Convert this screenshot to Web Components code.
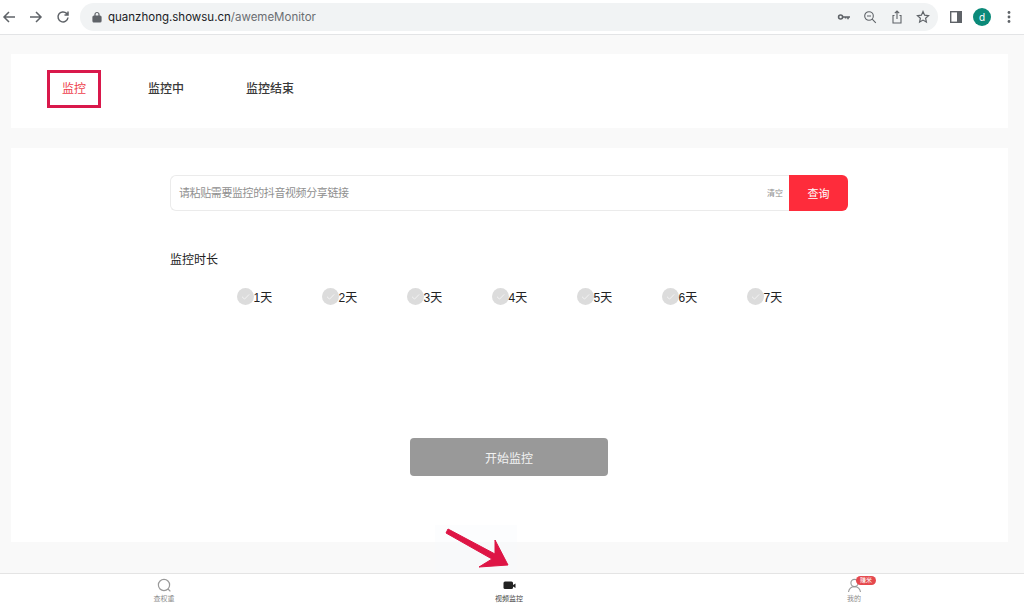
<!DOCTYPE html>
<html lang="zh">
<head>
<meta charset="utf-8">
<title>awemeMonitor</title>
<style>
  html, body { margin: 0; height: 100%; }
  body {
    width: 1024px;
    height: 605px;
    overflow: hidden;
    position: relative;
    display: flex;
    flex-direction: column;
    background: #f9f9f9;
    font-family: "Liberation Sans", "Noto Sans CJK SC", sans-serif;
    color: #222;
  }
</style>
</head>
<body>
<browser-bar></browser-bar>
<monitor-page></monitor-page>
<bottom-tabs></bottom-tabs>
<annotation-arrow></annotation-arrow>

<script>
class BrowserBar extends HTMLElement {
  constructor() {
    super();
    this.attachShadow({ mode: "open" });
  }

  connectedCallback() {
    this.shadowRoot.innerHTML = /* html */`
    <style>
      :host {
        display: flex;
        align-items: center;
        height: 34px;
        flex: none;
        background: #fff;
        border-bottom: 1px solid #e3e4e6;
        padding-left: 1px;
      }
      svg { display: block; flex: none; fill: none; stroke: #5f6368; stroke-width: 1.5; }
      .nav { display: flex; gap: 11px; align-items: center; }
      .omni {
        display: flex;
        align-items: center;
        width: 858px;
        height: 28px;
        margin-left: 9px;
        border-radius: 14px;
        background: #f1f3f4;
        box-sizing: border-box;
        padding: 0 8px 0 12px;
        font: 11.5px Inter, "Liberation Sans", sans-serif;
        color: #202124;
      }
      .url { margin-left: 6px; }
      .url span { color: #6b6e72; }
      .tools { display: flex; align-items: center; gap: 12.300px; margin-left: auto; }
      .after { display: flex; align-items: center; margin-left: 12px; }
      .avatar {
        width: 18px; height: 18px; border-radius: 50%;
        margin-left: 11px;
        background: #0b8a79; color: #fff;
        font: 10px/18px Inter, sans-serif; text-align: center;
      }
      .dots { margin-left: 16px; }
    </style>
    <div class="nav">
      <svg width="16" height="16" viewBox="0 0 16 16"><path d="M14 8H3M8 3 3 8l5 5"/></svg>
      <svg width="16" height="16" viewBox="0 0 16 16"><path d="M2 8h11M8 3l5 5-5 5"/></svg>
      <svg width="16" height="16" viewBox="0 0 16 16"><path d="M13 8.500A5 5 0 1 1 11.600 4.400L13 6M13 2.500V6H9.500"/></svg>
    </div>
    <div class="omni">
      <svg width="10" height="12" viewBox="0 0 10 12" style="stroke:#5f6368;stroke-width:1.2"><rect x="1" y="5" width="8" height="6" rx="1" fill="#5f6368"/><path d="M3 5V3.500a2 2 0 0 1 4 0V5"/></svg>
      <div class="url">quanzhong.showsu.cn<span>/awemeMonitor</span></div>
      <div class="tools">
        <svg width="14" height="14" viewBox="0 0 14 14" style="stroke-width:1.6"><circle cx="3.600" cy="7" r="2"/><path d="M5.600 7H13M11 7v2.200M8.600 7v1.600"/></svg>
        <svg width="14" height="14" viewBox="0 0 14 14" style="stroke-width:1.1"><circle cx="6" cy="6" r="4.300"/><path d="m9.200 9.200 3.600 3.600M4 6h4"/></svg>
        <svg width="14" height="14" viewBox="0 0 14 14" style="stroke-width:1.1"><path d="M4.500 5.500H3v7.500h8V5.500H9.500M7 9V1.200M4.800 3.200 7 1l2.200 2.200"/></svg>
        <svg width="14" height="14" viewBox="0 0 14 14" style="stroke-width:1.2"><path d="m7 1.600 1.600 3.600 3.900.4-2.900 2.600.8 3.800L7 10.100 3.600 12l.8-3.800-2.900-2.600 3.900-.4z"/></svg>
      </div>
    </div>
    <div class="after">
      <svg width="12" height="12" viewBox="0 0 12 12" style="stroke-width:1.4"><rect x=".7" y=".7" width="10.600" height="10.600"/><rect x="7" y="1" width="4" height="10" fill="#5f6368" stroke="none"/></svg>
      <div class="avatar">d</div>
      <svg class="dots" width="4" height="14" viewBox="0 0 4 14" style="stroke:none;fill:#5f6368"><circle cx="2" cy="2.500" r="1.400"/><circle cx="2" cy="7" r="1.400"/><circle cx="2" cy="11.500" r="1.400"/></svg>
    </div>
    `;
  }
}

class MonitorTabs extends HTMLElement {
  constructor() {
    super();
    this.attachShadow({ mode: "open" });
  }

  connectedCallback() {
    this.shadowRoot.innerHTML = /* html */`
    <style>
      :host {
        display: flex;
        flex: none;
        align-items: center;
        height: 74px;
        box-sizing: border-box;
        background: #fff;
        padding: 0 0 5px 36px;
        font-size: 12px;
        font-weight: 500;
        color: #3a3a3a;
      }
      .tab { line-height: 18px; }
      .active {
        width: 54px;
        height: 38px;
        box-sizing: border-box;
        border: 3px solid #d9184b;
        display: flex;
        align-items: center;
        justify-content: center;
        color: #ee3f4d;
        font-weight: 400;
      }
      .mid { margin-left: 47px; }
      .end { margin-left: 62px; }
    </style>
    <div class="tab active">监控</div>
    <div class="tab mid">监控中</div>
    <div class="tab end">监控结束</div>
    `;
  }
}

class LinkSearch extends HTMLElement {
  constructor() {
    super();
    this.attachShadow({ mode: "open" });
  }

  connectedCallback() {
    this.shadowRoot.innerHTML = /* html */`
    <style>
      :host {
        display: flex;
        height: 36px;
        font-size: 11px;
      }
      .field {
        flex: 1;
        display: flex;
        align-items: center;
        justify-content: space-between;
        box-sizing: border-box;
        border: 1px solid #ebebeb;
        border-right: 0;
        border-radius: 6px 0 0 6px;
        padding: 0 6px 2px 8px;
        color: #8f8f8f;
      }
      .hint { letter-spacing: -.4px; }
      .clear { font-size: 8px; }
      .go {
        width: 59px;
        border-radius: 0 6px 6px 0;
        background: #fe2c3b;
        color: #fff;
        font-size: 11px;
        display: flex;
        align-items: center;
        justify-content: center;
      }
    </style>
    <div class="field"><span class="hint">请粘贴需要监控的抖音视频分享链接</span><span class="clear">清空</span></div>
    <div class="go">查询</div>
    `;
  }
}

class DayOption extends HTMLElement {
  constructor() {
    super();
    this.attachShadow({ mode: "open" });
  }

  connectedCallback() {
    this.shadowRoot.innerHTML = /* html */`
    <style>
      :host { display: flex; align-items: center; font-size: 12px; color: #222; }
      svg { display: block; flex: none; }
    </style>
    <svg width="17" height="17" viewBox="0 0 17 17">
      <circle cx="8.500" cy="8.500" r="8.500" fill="#dcdcdc"/>
      <path d="m5 8.700 2.500 2.400L12.200 6.400" fill="none" stroke="#f4f4f4" stroke-width="1"/>
    </svg>
    <slot></slot>
    `;
  }
}

class MonitorPage extends HTMLElement {
  constructor() {
    super();
    this.attachShadow({ mode: "open" });
  }

  connectedCallback() {
    this.shadowRoot.innerHTML = /* html */`
    <style>
      :host {
        display: flex;
        flex-direction: column;
        flex: none;
        gap: 20px;
        height: 538px;
        box-sizing: border-box;
        padding: 19px 16px 0 11px;
      }
      .main {
        height: 394px;
        flex: none;
        box-sizing: border-box;
        background: #fff;
        padding: 27px 160px 0 159px;
        display: flex;
        flex-direction: column;
      }
      .label { margin-top: 40px; font-size: 12px; line-height: 18px; color: #222; }
      .days {
        display: grid;
        grid-template-columns: repeat(7, 85px);
        margin: 19px 0 0 66.500px;
      }
      .start {
        align-self: center;
        width: 198px;
        height: 38px;
        margin-top: 133px;
        border-radius: 4px;
        background: #999;
        color: #f2f2f2;
        font-size: 12px;
        display: flex;
        align-items: center;
        justify-content: center;
      }
    </style>
    <monitor-tabs></monitor-tabs>
    <div class="main">
      <link-search></link-search>
      <div class="label">监控时长</div>
      <div class="days">
        <day-option>1天</day-option>
        <day-option>2天</day-option>
        <day-option>3天</day-option>
        <day-option>4天</day-option>
        <day-option>5天</day-option>
        <day-option>6天</day-option>
        <day-option>7天</day-option>
      </div>
      <div class="start">开始监控</div>
    </div>
    `;
  }
}

class BottomTabs extends HTMLElement {
  constructor() {
    super();
    this.attachShadow({ mode: "open" });
  }

  connectedCallback() {
    this.shadowRoot.innerHTML = /* html */`
    <style>
      :host {
        display: flex;
        justify-content: space-between;
        flex: none;
        height: 32px;
        box-sizing: border-box;
        background: #fff;
        border-top: 1px solid #e4e4e4;
        padding: 4px 147px 0 141px;
      }
      .item {
        position: relative;
        width: 46px;
        display: flex;
        flex-direction: column;
        align-items: center;
        font-size: 7px;
        line-height: 10px;
        color: #8c8c8c;
      }
      .item.on { color: #444; }
      svg { display: block; margin-bottom: 1px; }
      .badge {
        position: absolute;
        left: 25px;
        top: -2px;
        width: 20px;
        height: 9px;
        border-radius: 5px;
        background: #e5484d;
        color: #fff;
        font-size: 6px;
        line-height: 9px;
        text-align: center;
      }
    </style>
    <div class="item">
      <svg width="15" height="15" viewBox="0 0 15 15" fill="none" stroke="#999" stroke-width="1.2"><circle cx="7" cy="7" r="5.600"/><path d="m11 11 2.400 2.400"/></svg>
      查权重
    </div>
    <div class="item on">
      <svg width="15" height="15" viewBox="0 0 15 15" fill="#222"><rect x="1.500" y="3.500" width="9.500" height="7.500" rx="1.500"/><path d="m11 7 2.500-1.500v4.500L11 8.500z"/></svg>
      视频监控
    </div>
    <div class="item">
      <svg width="15" height="15" viewBox="0 0 15 15" fill="none" stroke="#999" stroke-width="1.1"><circle cx="7.500" cy="5" r="3.600"/><path d="M1.500 14c.5-3.400 2.800-5.200 6-5.200s5.500 1.800 6 5.200"/></svg>
      我的
      <span class="badge">赚米</span>
    </div>
    `;
  }
}

class AnnotationArrow extends HTMLElement {
  constructor() {
    super();
    this.attachShadow({ mode: "open" });
  }

  connectedCallback() {
    this.shadowRoot.innerHTML = /* html */`
    <style>
      :host {
        position: absolute;
        left: 430px;
        top: 520px;
        width: 90px;
        height: 60px;
      }
      svg { display: block; position: absolute; }
      .halo { position: absolute; left: 5px; top: 5px; width: 82px; height: 48px; background: rgba(244, 249, 252, .3); }
    </style>
    <div class="halo"></div>
    <svg width="90" height="60" viewBox="0 0 90 60">
      <path d="M18 9 65 34 65 20 78 45 49 47 62 39 16 13Z" fill="#de1545" stroke="#de1545" stroke-width="1" stroke-linejoin="round"/>
    </svg>
    `;
  }
}

customElements.define("browser-bar", BrowserBar);
customElements.define("monitor-tabs", MonitorTabs);
customElements.define("link-search", LinkSearch);
customElements.define("day-option", DayOption);
customElements.define("monitor-page", MonitorPage);
customElements.define("bottom-tabs", BottomTabs);
customElements.define("annotation-arrow", AnnotationArrow);
</script>
</body>
</html>
